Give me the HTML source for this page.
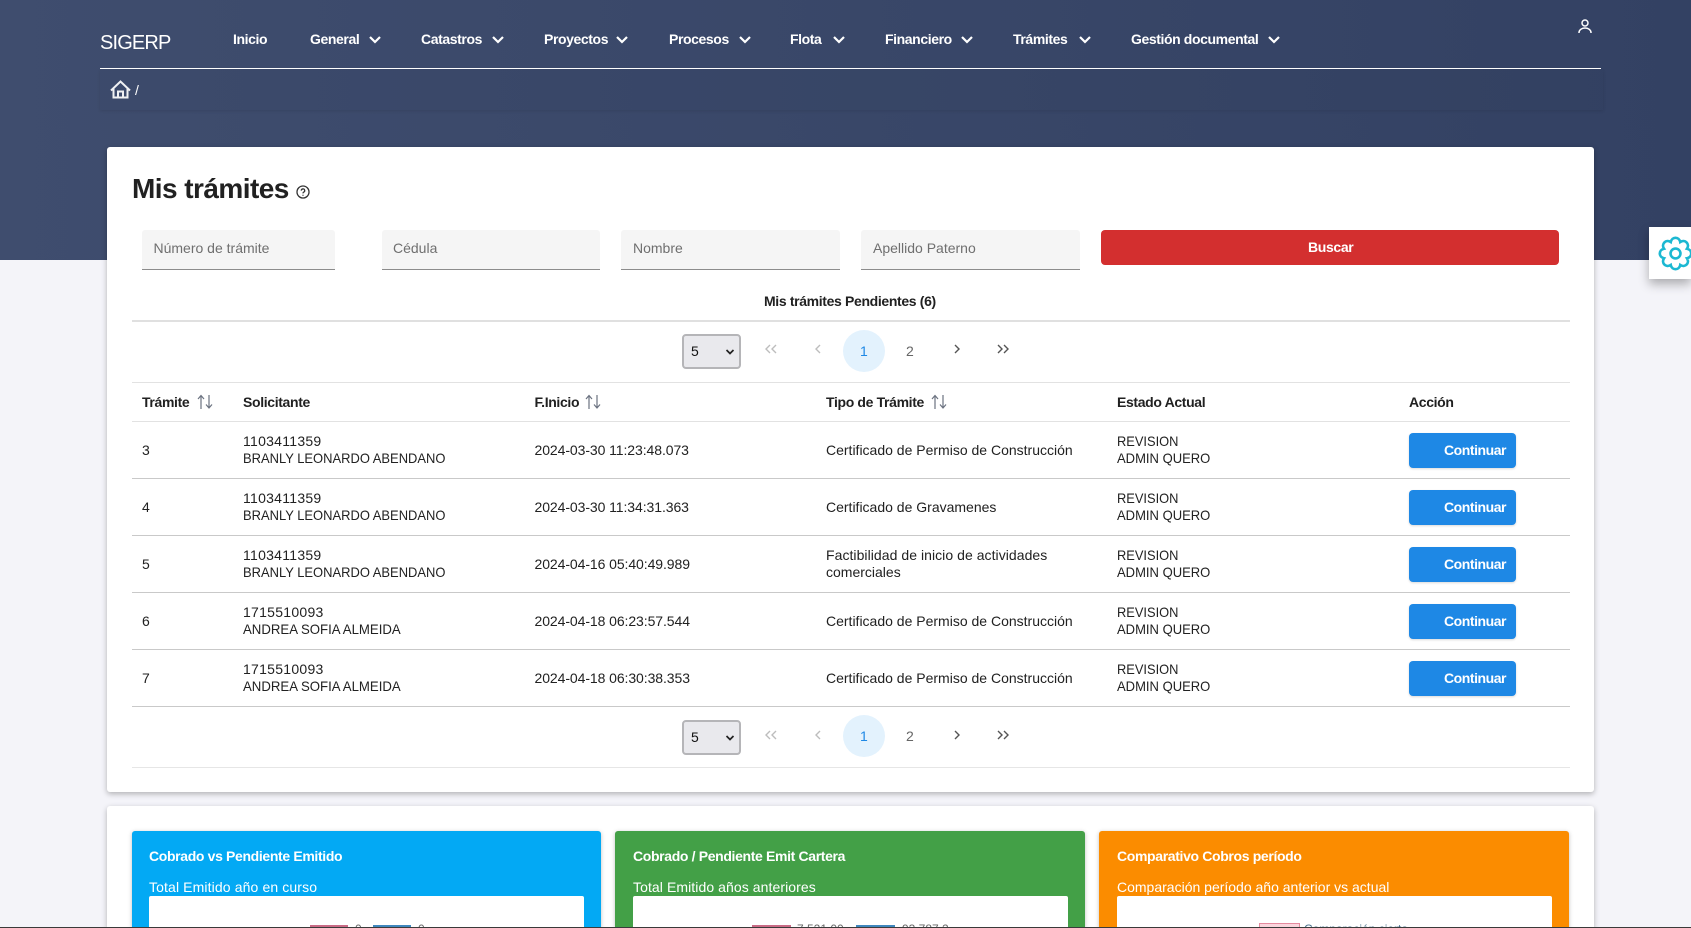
<!DOCTYPE html>
<html lang="es"><head><meta charset="utf-8"><title>SIGERP</title>
<style>
html,body{margin:0;padding:0;width:1691px;height:928px;overflow:hidden}
body{background:#f4f4f9;font-family:"Liberation Sans",Arial,sans-serif;font-size:14px;color:#212121}
#p{position:relative;width:1691px;height:928px;overflow:hidden}
.a,.t{position:absolute}
.t{line-height:20px;height:20px;white-space:nowrap}
.b{font-weight:bold;letter-spacing:-.35px}
.d{letter-spacing:.27px}
.f{letter-spacing:-.08px}
.u1,.u2,.u3,.u4{transform-origin:left center}
.u1{transform:scaleX(.925)}
.u2{transform:scaleX(.943)}
.u3{transform:scaleX(.93)}
.u4{transform:scaleX(.918)}
.hd{left:0;top:0;width:1691px;height:260px;background:linear-gradient(90deg,#3f4d6e,#334163)}
.n{color:#fff;font-weight:bold;letter-spacing:-.4px;top:29px}
.card{background:#fff;border-radius:3px;box-shadow:0 2px 6px rgba(0,0,0,.28)}
.in{background:#f5f5f5;border-bottom:1px solid #8c8c8c;top:230px;height:39px;border-radius:3px 3px 0 0}
.ph{color:#6f6f6f;top:238px}
.ln{left:132px;width:1438px;height:1px;background:#c9c9c9}
.btn{left:1409px;width:107px;height:35px;background:#1e88e5;border-radius:4px;box-shadow:0 1px 2px rgba(0,0,0,.15)}
.bt{left:1444px;color:#fff;font-weight:bold;letter-spacing:-.45px}
.sel{left:682px;width:55px;height:31px;background:#e9e9ed;border:2px solid #b5b5b8;border-radius:4px}
.circ{left:843px;width:42px;height:42px;border-radius:50%;background:#e3f2fd}
.panel{border-radius:3px 3px 0 0;top:831px;height:97px;box-shadow:0 1px 4px rgba(0,0,0,.25)}
.box{background:#fff;top:896px;height:32px;border-radius:2px 2px 0 0}
.w{color:#fff}
svg{position:absolute;display:block;overflow:visible}
</style></head><body><div id="p">
<div class="a hd"></div>

<div class="t w" style="left:100px;top:33px;font-size:20px;letter-spacing:-.85px">SIGERP</div>
<div class="t n" style="left:233px">Inicio</div>
<div class="t n" style="left:310px">General</div>
<div class="t n" style="left:421px">Catastros</div>
<div class="t n" style="left:544px">Proyectos</div>
<div class="t n" style="left:669px">Procesos</div>
<div class="t n" style="left:790px">Flota</div>
<div class="t n" style="left:885px">Financiero</div>
<div class="t n" style="left:1013px">Trámites</div>
<div class="t n" style="left:1131px">Gestión documental</div>
<svg style="left:0;top:0" width="1691" height="110" fill="none" stroke="#fff" stroke-width="2.200">
<path d="M370 37l5 5 5-5M493 37l5 5 5-5M617 37l5 5 5-5M740 37l5 5 5-5M834 37l5 5 5-5M962 37l5 5 5-5M1080 37l5 5 5-5M1269 37l5 5 5-5"/>
<circle cx="1585" cy="23" r="3" stroke-width="1.500"/>
<path d="M1579 33v-.5a6 4.500 0 0 1 12 0v.5" stroke-width="1.500"/>
<path d="M111 90.500l9.500-9 9.500 9M113.500 88.500v9h14v-9M118 97.500v-6h5v6" stroke-width="2"/>
</svg>
<div class="a" style="left:100px;top:68px;width:1501px;height:1px;background:#fff"></div>
<div class="a" style="left:100px;top:70px;width:1503px;height:40px;background:rgba(40,50,80,.07);box-shadow:0 1px 3px rgba(0,0,0,.1)"></div>
<div class="t w" style="left:135px;top:80px">/</div>

<div class="a card" style="left:107px;top:147px;width:1487px;height:645px"></div>
<div class="a card" style="left:107px;top:806px;width:1487px;height:122px;border-radius:3px 3px 0 0"></div>

<div class="t" style="left:132px;top:179px;font-size:28px;font-weight:bold;letter-spacing:-.55px;color:#212121">Mis trámites</div>
<svg style="left:296px;top:185px" width="14" height="14" viewBox="0 0 14 14" fill="none" stroke="#333" stroke-width="1.300"><circle cx="7" cy="7" r="6"/><path d="M5.300 5.600a1.700 1.700 0 1 1 2.500 1.500c-.6.3-.8.600-.8 1.300M7 9.700v1"/></svg>

<div class="a in" style="left:142px;width:193px"></div>
<div class="a in" style="left:382px;width:218px"></div>
<div class="a in" style="left:621px;width:219px"></div>
<div class="a in" style="left:861px;width:219px"></div>
<div class="t ph" style="left:153.500px">Número de trámite</div>
<div class="t ph" style="left:393px">Cédula</div>
<div class="t ph" style="left:633px">Nombre</div>
<div class="t ph" style="left:873px">Apellido Paterno</div>
<div class="a" style="left:1101px;top:230px;width:458px;height:35px;background:#d32f2f;border-radius:4px"></div>
<div class="t b w" style="left:1308px;top:237px">Buscar</div>

<div class="t b" style="left:764px;top:291px">Mis trámites Pendientes (6)</div>
<div class="a ln" style="top:320px;height:2px;background:#e0e0e0"></div>

<!-- paginador superior -->
<div class="a sel" style="top:334px"></div>
<div class="t" style="left:691px;top:341px;color:#111">5</div>
<div class="a circ" style="top:330px"></div>
<div class="t" style="left:860px;top:341px;color:#1e88e5">1</div>
<div class="t" style="left:906px;top:341px;color:#666">2</div>

<div class="a ln" style="top:382px;background:#e2e2e2"></div>
<div class="a ln" style="top:421px;background:#e2e2e2"></div>
<div class="a ln" style="top:478px"></div>
<div class="a ln" style="top:535px"></div>
<div class="a ln" style="top:592px"></div>
<div class="a ln" style="top:649px"></div>
<div class="a ln" style="top:706px"></div>

<div class="a btn" style="top:433px"></div>
<div class="a btn" style="top:490px"></div>
<div class="a btn" style="top:547px"></div>
<div class="a btn" style="top:604px"></div>
<div class="a btn" style="top:661px"></div>

<!-- paginador inferior -->
<div class="a sel" style="top:720px"></div>
<div class="t" style="left:691px;top:727px;color:#111">5</div>
<div class="a circ" style="top:715px"></div>
<div class="t" style="left:860px;top:726px;color:#1e88e5">1</div>
<div class="t" style="left:906px;top:726px;color:#666">2</div>
<div class="a ln" style="top:767px;background:#e6e6e6"></div>

<svg style="left:0;top:0" width="1691" height="928" fill="none" stroke-width="1.400">
<path d="M770 345l-4 4 4 4M776 345l-4 4 4 4M820 345l-4 4 4 4" stroke="#bdbdbd"/>
<path d="M955 345l4 4-4 4M998 345l4 4-4 4M1004 345l4 4-4 4" stroke="#555"/>
<path d="M770 731l-4 4 4 4M776 731l-4 4 4 4M820 731l-4 4 4 4" stroke="#bdbdbd"/>
<path d="M955 731l4 4-4 4M998 731l4 4-4 4M1004 731l4 4-4 4" stroke="#555"/>
<path d="M726.500 350l3.500 3.500 3.500-3.500M726.500 736l3.500 3.500 3.500-3.500" stroke="#222" stroke-width="1.700"/>
<path d="M201 409v-13M198 399l3-3.500 3 3.500M209 395v13M206 404.500l3 3.500 3-3.500" stroke="#6b7280" stroke-width="1.200"/>
<path d="M589 409v-13M586 399l3-3.500 3 3.500M597 395v13M594 404.500l3 3.500 3-3.500" stroke="#6b7280" stroke-width="1.200"/>
<path d="M935 409v-13M932 399l3-3.500 3 3.500M943 395v13M940 404.500l3 3.500 3-3.500" stroke="#6b7280" stroke-width="1.200"/>
</svg>

<!-- cabecera -->
<div class="t b" style="left:142px;top:392px">Trámite</div>
<div class="t b" style="left:243px;top:392px">Solicitante</div>
<div class="t b" style="left:534.500px;top:392px">F.Inicio</div>
<div class="t b" style="left:826px;top:392px">Tipo de Trámite</div>
<div class="t b" style="left:1117px;top:392px">Estado Actual</div>
<div class="t b" style="left:1409px;top:392px">Acción</div>

<!-- fila 3 -->
<div class="t" style="left:142px;top:440px">3</div>
<div class="t d" style="left:243px;top:431px">1103411359</div>
<div class="t u1" style="left:243px;top:448px">BRANLY LEONARDO ABENDANO</div>
<div class="t f" style="left:534.500px;top:440px">2024-03-30 11:23:48.073</div>
<div class="t" style="left:826px;top:440px">Certificado de Permiso de Construcción</div>
<div class="t u4" style="left:1117px;top:431px">REVISION</div>
<div class="t u3" style="left:1117px;top:448px">ADMIN QUERO</div>
<div class="t bt" style="top:440px">Continuar</div>

<!-- fila 4 -->
<div class="t" style="left:142px;top:497px">4</div>
<div class="t d" style="left:243px;top:488px">1103411359</div>
<div class="t u1" style="left:243px;top:505px">BRANLY LEONARDO ABENDANO</div>
<div class="t f" style="left:534.500px;top:497px">2024-03-30 11:34:31.363</div>
<div class="t" style="left:826px;top:497px">Certificado de Gravamenes</div>
<div class="t u4" style="left:1117px;top:488px">REVISION</div>
<div class="t u3" style="left:1117px;top:505px">ADMIN QUERO</div>
<div class="t bt" style="top:497px">Continuar</div>

<!-- fila 5 -->
<div class="t" style="left:142px;top:554px">5</div>
<div class="t d" style="left:243px;top:545px">1103411359</div>
<div class="t u1" style="left:243px;top:562px">BRANLY LEONARDO ABENDANO</div>
<div class="t f" style="left:534.500px;top:554px">2024-04-16 05:40:49.989</div>
<div class="t" style="left:826px;top:545px;letter-spacing:.05px">Factibilidad de inicio de actividades</div>
<div class="t" style="left:826px;top:562px">comerciales</div>
<div class="t u4" style="left:1117px;top:545px">REVISION</div>
<div class="t u3" style="left:1117px;top:562px">ADMIN QUERO</div>
<div class="t bt" style="top:554px">Continuar</div>

<!-- fila 6 -->
<div class="t" style="left:142px;top:611px">6</div>
<div class="t d" style="left:243px;top:602px">1715510093</div>
<div class="t u2" style="left:243px;top:619px">ANDREA SOFIA ALMEIDA</div>
<div class="t f" style="left:534.500px;top:611px">2024-04-18 06:23:57.544</div>
<div class="t" style="left:826px;top:611px">Certificado de Permiso de Construcción</div>
<div class="t u4" style="left:1117px;top:602px">REVISION</div>
<div class="t u3" style="left:1117px;top:619px">ADMIN QUERO</div>
<div class="t bt" style="top:611px">Continuar</div>

<!-- fila 7 -->
<div class="t" style="left:142px;top:668px">7</div>
<div class="t d" style="left:243px;top:659px">1715510093</div>
<div class="t u2" style="left:243px;top:676px">ANDREA SOFIA ALMEIDA</div>
<div class="t f" style="left:534.500px;top:668px">2024-04-18 06:30:38.353</div>
<div class="t" style="left:826px;top:668px">Certificado de Permiso de Construcción</div>
<div class="t u4" style="left:1117px;top:659px">REVISION</div>
<div class="t u3" style="left:1117px;top:676px">ADMIN QUERO</div>
<div class="t bt" style="top:668px">Continuar</div>

<!-- paneles -->
<div class="a panel" style="left:132px;width:469px;background:#03a9f4"></div>
<div class="a panel" style="left:615px;width:470px;background:#43a047"></div>
<div class="a panel" style="left:1099px;width:470px;background:#fb8c00"></div>
<div class="t b w" style="left:149px;top:846px">Cobrado vs Pendiente Emitido</div>
<div class="t w" style="left:149px;top:877px;letter-spacing:.12px">Total Emitido año en curso</div>
<div class="t b w" style="left:633px;top:846px">Cobrado / Pendiente Emit Cartera</div>
<div class="t w" style="left:633px;top:877px;letter-spacing:.08px">Total Emitido años anteriores</div>
<div class="t b w" style="left:1117px;top:846px">Comparativo Cobros período</div>
<div class="t w" style="left:1117px;top:877px">Comparación período año anterior vs actual</div>
<div class="a box" style="left:149px;width:435px"></div>
<div class="a box" style="left:633px;width:435px"></div>
<div class="a box" style="left:1117px;width:435px"></div>
<div class="a" style="left:310px;top:925px;width:38px;height:3px;background:#c96a85"></div>
<div class="a" style="left:373px;top:925px;width:38px;height:3px;background:#3f87bd"></div>
<div class="a" style="left:752px;top:925px;width:39px;height:3px;background:#c96a85"></div>
<div class="a" style="left:856px;top:925px;width:39px;height:3px;background:#3f87bd"></div>
<div class="a" style="left:1259px;top:923px;width:39px;height:5px;background:#fbd5dd;border:1px solid #e58a9f;border-bottom:0"></div>
<div class="a" style="left:0;top:918px;width:1691px;height:10px;overflow:hidden">
<div class="t" style="left:355px;top:1px;font-size:12px;color:#666">0</div>
<div class="t" style="left:418px;top:1px;font-size:12px;color:#666">0</div>
<div class="t" style="left:797px;top:1px;font-size:12px;color:#666">7,521.00</div>
<div class="t" style="left:902px;top:1px;font-size:12px;color:#666">93,787.2</div>
<div class="t" style="left:1304px;top:1px;font-size:12px;color:#466f8a">Comparación cierta</div>
</div>
<div class="a" style="left:0;top:927px;width:1691px;height:1px;background:#3a3a3a"></div>

<!-- engranaje -->
<div class="a" style="left:1649px;top:227px;width:42px;height:52px;background:#fff;box-shadow:0 5px 10px rgba(0,0,0,.3);overflow:hidden">
<svg style="left:8.500px;top:8.500px" width="35" height="35" viewBox="0 0 24 24" fill="none" stroke="#1cb8d2" stroke-width="1.800"><path d="M8.750 4.150C9.510.26 14.490.26 15.250 4.150C18.540 1.940 22.060 5.460 19.850 8.750C23.740 9.510 23.740 14.490 19.850 15.250C22.060 18.540 18.540 22.060 15.250 19.850C14.490 23.740 9.510 23.740 8.750 19.850C5.460 22.060 1.940 18.540 4.150 15.250C.26 14.490.26 9.510 4.150 8.750C1.940 5.460 5.460 1.940 8.750 4.150Z"/><circle cx="12" cy="12" r="3.400"/></svg>
</div>
</div></body></html>
